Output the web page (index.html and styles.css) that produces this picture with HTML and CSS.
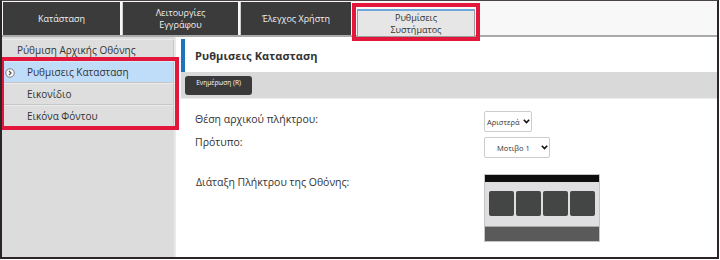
FILE: index.html
```html
<!DOCTYPE html>
<html lang="el">
<head>
    <meta charset="UTF-8">
    <title>Ρυθμίσεις Συστήματος</title>
    <link rel="stylesheet" href="styles.css">
</head>
<body>

<div class="screen">
    <div class="tabs">
        <div class="tab">Κατάσταση</div>
        <div class="tab">Λειτουργίες<br>Εγγράφου</div>
        <div class="tab">Έλεγχος Χρήστη</div>
        <div class="tab active mark">Ρυθμίσεις<br>Συστήματος</div>
    </div>

    <div class="body">
        <div class="side">
            <div class="item">Ρύθμιση Αρχικής Οθόνης</div>
            <div class="group mark">
                <div class="item sub selected">
                    <svg class="arrow" width="10" height="10" viewBox="0 0 10 10">
                        <circle cx="5" cy="5" r="4.2" fill="#ffffff" stroke="#777777" stroke-width="1"/>
                        <path d="M4 3 L6 5 L4 7" fill="none" stroke="#555555" stroke-width="1.3"/>
                    </svg>
                    Ρυθμισεις Κατασταση
                </div>
                <div class="item sub">Εικονίδιο</div>
                <div class="item sub">Εικόνα Φόντου</div>
            </div>
        </div>

        <div class="main">
            <div class="title">Ρυθμισεις Κατασταση</div>
            <div class="toolbar">
                <button class="btn">Ενημέρωση (R)</button>
            </div>

            <div class="form">
                <div class="row">
                    <div class="label">Θέση αρχικού πλήκτρου:</div>
                    <div class="select small">
                        <span>Αριστερά</span>
                        <svg width="7" height="5" viewBox="0 0 7 5"><path d="M0.8 0.8 L3.5 3.6 L6.2 0.8" fill="none" stroke="#111111" stroke-width="1.6"/></svg>
                    </div>
                </div>
                <div class="row">
                    <div class="label">Πρότυπο:</div>
                    <div class="select wide">
                        <span>Μοτιβο 1</span>
                        <svg width="7" height="5" viewBox="0 0 7 5"><path d="M0.8 0.8 L3.5 3.6 L6.2 0.8" fill="none" stroke="#111111" stroke-width="1.6"/></svg>
                    </div>
                </div>
                <div class="row layout">
                    <div class="label">Διάταξη Πλήκτρου της Οθόνης:</div>
                    <div class="preview">
                        <div class="preview-top"></div>
                        <div class="keys">
                            <div class="key"></div>
                            <div class="key"></div>
                            <div class="key"></div>
                            <div class="key"></div>
                        </div>
                        <div class="preview-bottom"></div>
                    </div>
                </div>
            </div>
        </div>
    </div>
</div>

</body>
</html>
```

FILE: styles.css
```css
body {
    margin: 0;
    font-family: "Open Sans", "Noto Sans", sans-serif;
    background-color: #ffffff;
}
.screen {
    width: 719px;
    height: 259px;
    box-sizing: border-box;
    border: 2px solid #2b2525;
    border-top: 1px solid #4a4444;
    display: flex;
    flex-direction: column;
    overflow: hidden;
}

/* tab bar */
.tabs {
    display: flex;
    gap: 2px;
    height: 36px;
    padding: 1px 0 0 1px;
    box-sizing: border-box;
    background-color: #f8f8f8;
    border-bottom: 2px solid #aaaaaa;
    flex-shrink: 0;
}
.tab {
    background-color: #3b3b3b;
    color: #f2f2f2;
    font-size: 9px;
    line-height: 12px;
    text-align: center;
    display: flex;
    align-items: center;
    justify-content: center;
    width: 117px;
    border-left: 1px solid #cfcfcf;
}
.tab:first-child {
    border-left: none;
}
.tab:nth-child(2) {
    width: 115px;
}
.tab:nth-child(3) {
    width: 110px;
}
.tab.active {
    position: relative;
    width: 116px;
    margin: 7px 0 -2px 4px;
    background-color: #e6e6e6;
    color: #333333;
    border: 1px solid #9c9c9c;
    border-top: 2px solid #6ea6da;
}
.mark::after {
    content: "";
    position: absolute;
    border: 4px solid #e3173c;
    pointer-events: none;
}
.tab.mark::after {
    top: -8px;
    bottom: -5px;
    left: -6px;
    right: -6px;
}

/* body */
.body {
    display: flex;
    flex: 1;
}
.side {
    width: 172px;
    background-color: #dcdcdc;
    border-right: 2px solid #e9e9e9;
    padding-top: 2px;
}
.item {
    height: 20px;
    font-size: 10px;
    color: #333333;
    display: flex;
    align-items: center;
    padding-left: 15px;
    background-color: #dedede;
    border-top: 1px solid #ececec;
    border-bottom: 1px solid #c6c6c6;
    border-right: 1px solid #c6c6c6;
}
.group {
    position: relative;
}
.group.mark::after {
    top: -4px;
    bottom: -3px;
    left: -2px;
    right: -5px;
}
.item.sub {
    padding-left: 25px;
}
.item.selected {
    position: relative;
    background-color: #bfdcf9;
    border-top-color: #d6e9fb;
}
.arrow {
    position: absolute;
    left: 3px;
    top: 6px;
}

/* main panel */
.main {
    flex: 1;
    padding-left: 5px;
    background-color: #ffffff;
}
.title {
    height: 33px;
    margin-top: 2px;
    border-left: 4px solid #1c73be;
    padding-left: 10px;
    font-size: 11px;
    font-weight: bold;
    color: #333333;
    display: flex;
    align-items: center;
    letter-spacing: 0.1px;
}
.toolbar {
    height: 27px;
    background-color: #d9d9d9;
    padding: 4px 0 0 4px;
    box-sizing: border-box;
    border-bottom: 1px solid #ececec;
}
.btn {
    display: block;
    width: 67px;
    height: 19px;
    background-color: #3a3a3a;
    color: #ffffff;
    border: none;
    border-radius: 3px;
    font-family: "Open Sans", sans-serif;
    font-size: 6.5px;
    padding: 0 0 6px 0;
    line-height: 9px;
}

.form {
    padding: 12px 0 0 14px;
}
.row {
    display: flex;
    align-items: flex-start;
    margin-bottom: 2px;
}
.label {
    width: 289px;
    font-size: 10.5px;
    line-height: 16px;
    color: #333333;
}
.select {
    height: 21px;
    box-sizing: border-box;
    border: 1px solid #cccccc;
    border-radius: 2px;
    display: flex;
    align-items: center;
    font-size: 7.5px;
    color: #333333;
    background-color: #ffffff;
}
.select.small {
    width: 48px;
    padding-left: 2px;
    gap: 3px;
}
.select.wide {
    width: 66px;
    margin-top: 3px;
    padding-left: 12px;
    gap: 11px;
}
.row.layout {
    margin-top: 16px;
}
.row.layout .label {
    padding-left: 1px;
    width: 288px;
}

/* screen layout preview */
.preview {
    width: 116px;
    height: 68px;
    box-sizing: border-box;
    border: 1px solid #c4c4c4;
    background-color: #dfdfe1;
    display: flex;
    flex-direction: column;
}
.preview-top {
    height: 7px;
    background-color: #0e0e0e;
}
.keys {
    display: flex;
    gap: 2px;
    padding: 9px 0 0 4px;
    height: 25px;
}
.key {
    width: 25px;
    height: 25px;
    background-color: #444545;
    border-radius: 2px;
}
.preview-bottom {
    margin-top: auto;
    height: 14px;
    background-color: #5a5a5a;
    border-top: 1px solid #a9a9a9;
}
```
